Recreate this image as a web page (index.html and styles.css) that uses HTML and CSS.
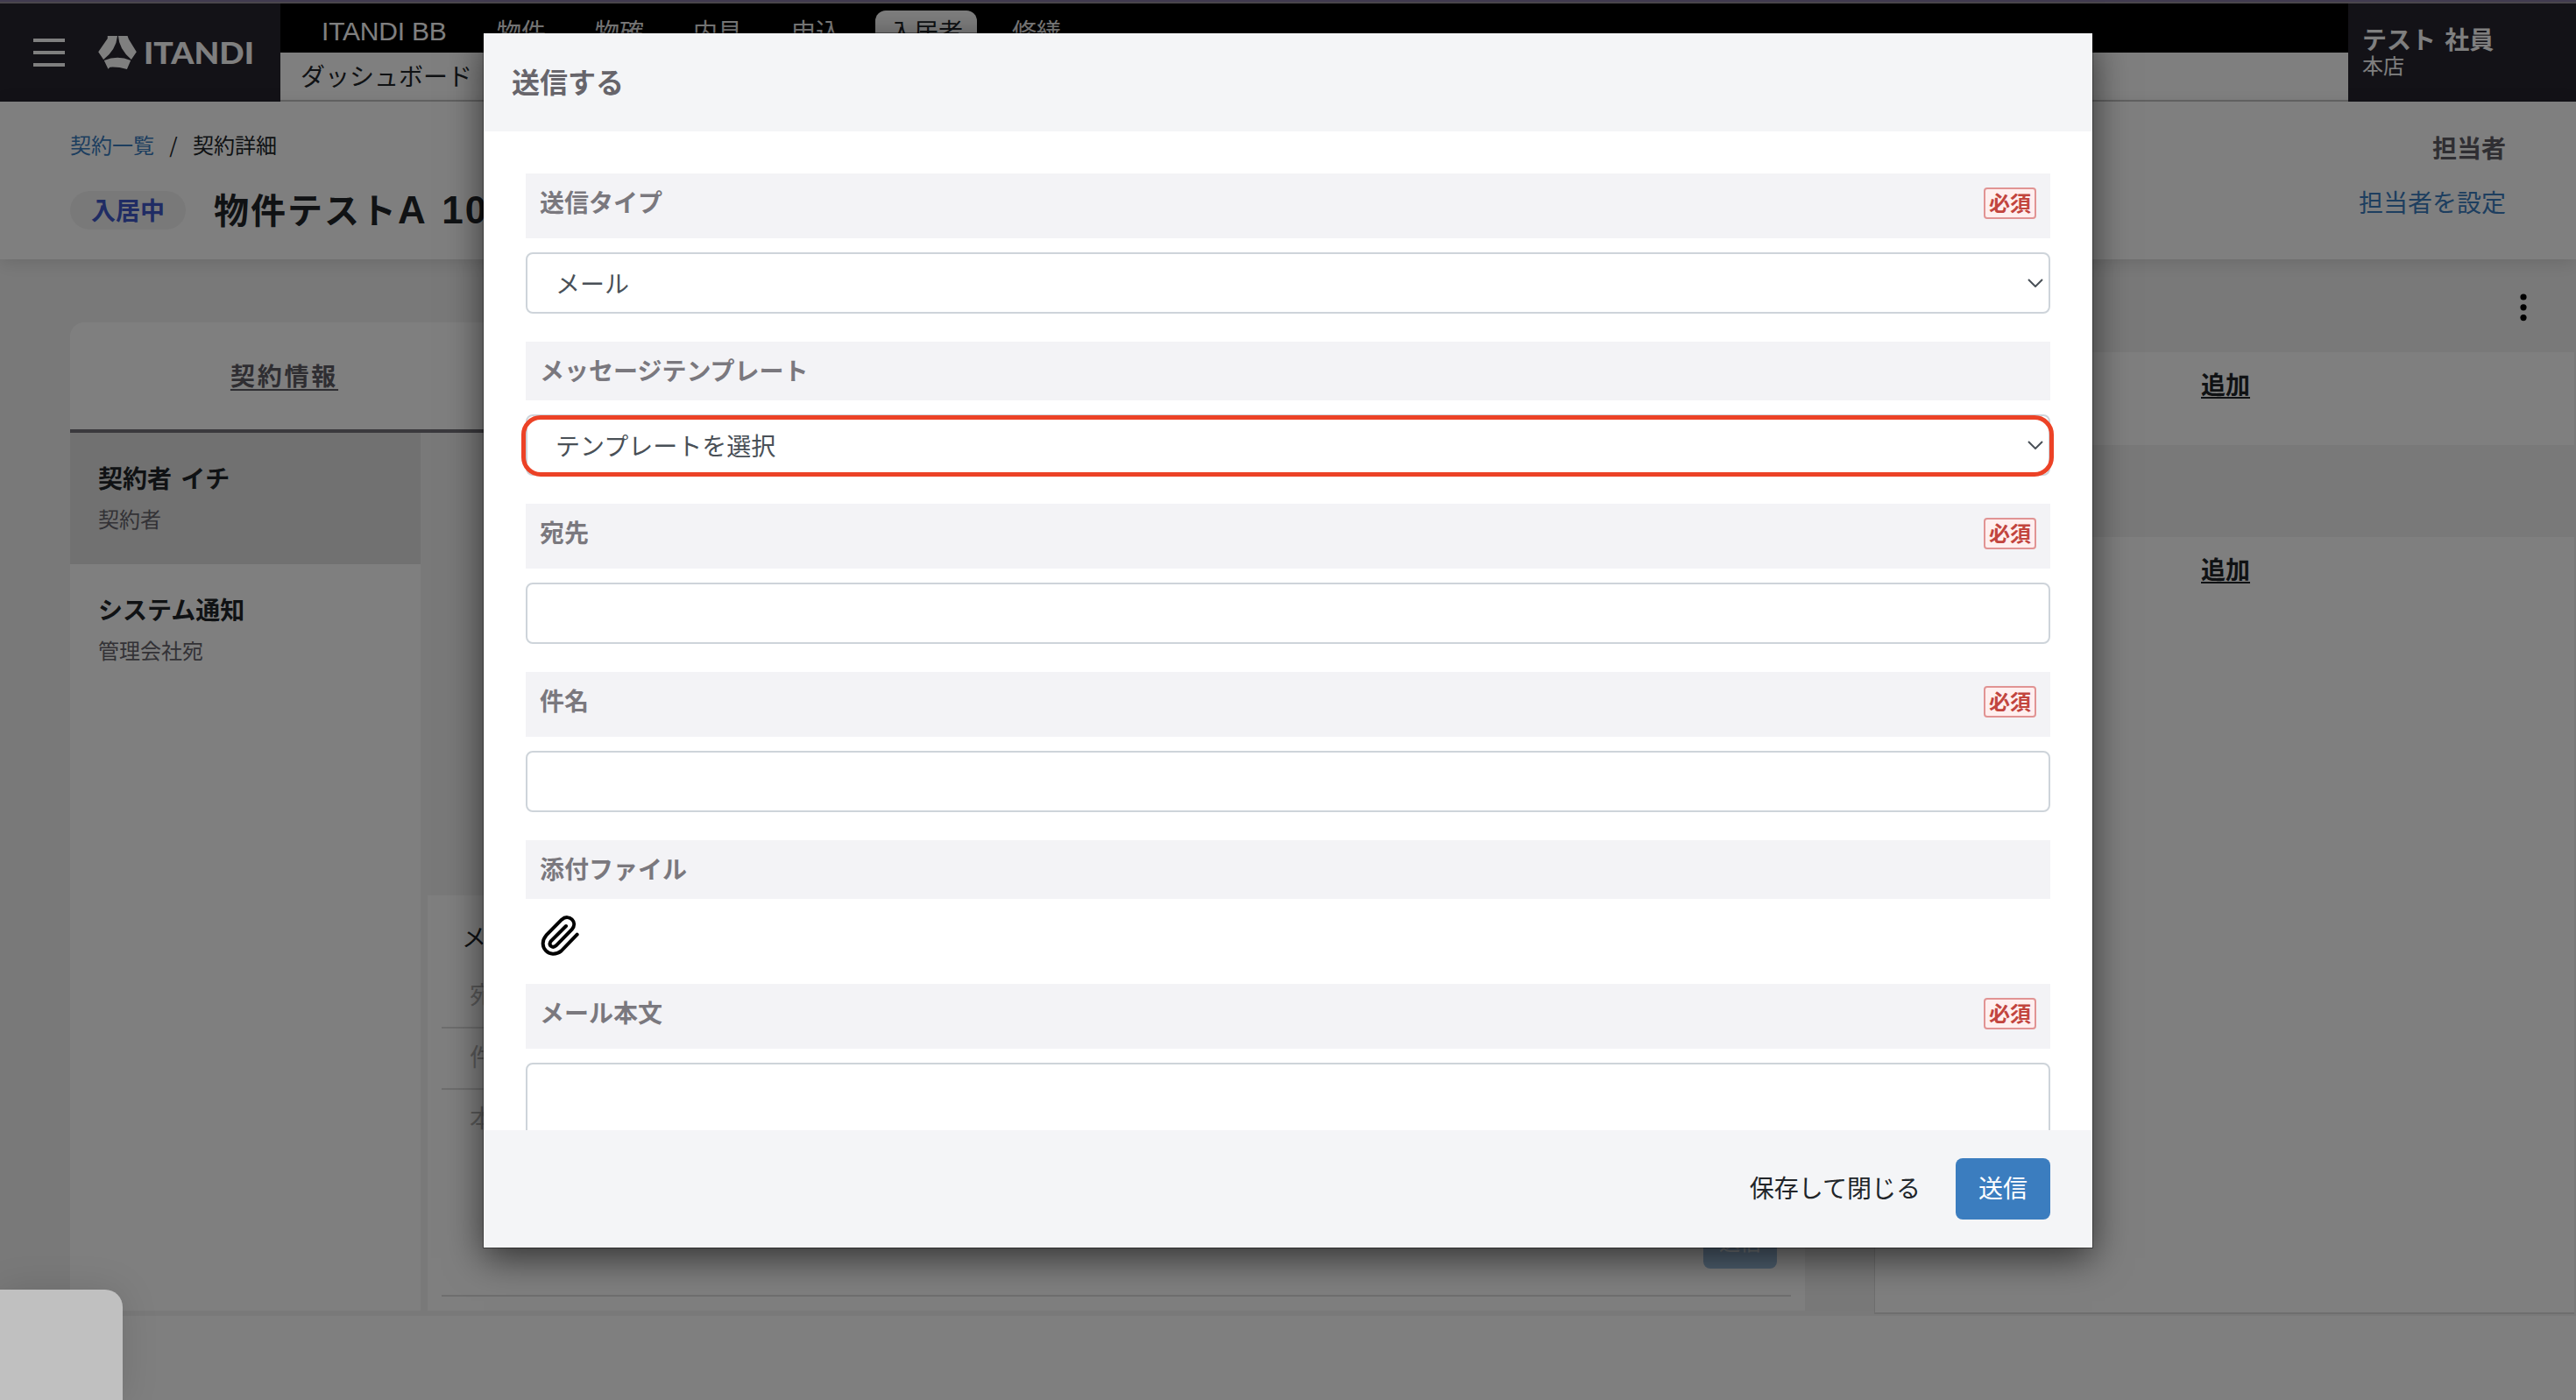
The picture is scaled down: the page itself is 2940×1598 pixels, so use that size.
FILE: index.html
```html
<!DOCTYPE html>
<html lang="ja">
<head>
<meta charset="utf-8">
<title>契約詳細</title>
<link rel="stylesheet" href="styles.css">
</head>
<body>
<div class="top-strip"></div>
<div class="page">
  <header class="header">
    <div class="brand">
      <div class="burger"><i></i><i></i><i></i></div>
      <svg class="mark" viewBox="276 63 132 115"><path d="M308 63H342Q338 110 294 145L276 118L308 72ZM345 63H377L381 74L408 118L390 145Q347 108 345 63ZM296 148Q343 128 388 148L375 178Q343 169 316 171L310 177Z"/></svg>
      <svg class="wordmark" viewBox="0 0 130 44"><text x="0" y="35" textLength="126" lengthAdjust="spacingAndGlyphs">ITANDI</text></svg>
    </div>
    <div class="navs">
      <nav class="nav">
        <a class="nav-item latin">ITANDI BB</a><a class="nav-item">物件</a><a class="nav-item">物確</a><a class="nav-item">内見</a><a class="nav-item">申込</a><a class="nav-item active">入居者</a><a class="nav-item">修繕</a>
      </nav>
      <nav class="subnav"><a>ダッシュボード</a></nav>
    </div>
    <div class="user"><b>テスト 社員</b><span>本店</span></div>
  </header>

  <section class="summary">
    <div>
      <div class="crumbs"><a class="link">契約一覧</a><span class="slash">/</span><span>契約詳細</span></div>
      <div class="title-row"><span class="status">入居中</span><h1>物件テスト<span class="num">A 10</span></h1></div>
    </div>
    <div class="staff"><b>担当者</b><a class="link">担当者を設定</a></div>
  </section>

  <main class="work">
    <div class="left">
      <div class="tabs"><a class="tab">契約情報</a></div>
      <div class="columns">
        <aside class="threads">
          <div class="thread selected"><b>契約者 イチ</b><span>契約者</span></div>
          <div class="thread"><b>システム通知</b><span>管理会社宛</span></div>
        </aside>
        <div class="compose">
          <div class="compose-title">メール</div>
          <div class="compose-row">宛先</div>
          <div class="compose-row">件名</div>
          <div class="compose-row body">本文<span class="mini-send">送信</span></div>
        </div>
      </div>
    </div>
    <div class="right">
      <div class="band menu"><svg class="kebab" viewBox="0 0 8 32"><circle cx="4" cy="4" r="3.6"/><circle cx="4" cy="15.8" r="3.6"/><circle cx="4" cy="27.6" r="3.6"/></svg></div>
      <div class="entry"><a>追加</a></div>
      <div class="band"></div>
      <div class="entry"><a>追加</a></div>
    </div>
  </main>
</div>

<div class="backdrop"></div>
<div class="widget"></div>

<div class="modal">
  <div class="modal-head">送信する</div>
  <div class="modal-body">
    <div class="field">
      <div class="label required">送信タイプ<span class="badge">必須</span></div>
      <div class="control">メール<svg class="chev" viewBox="0 0 18 10"><path d="M1 1L9 9L17 1"/></svg></div>
    </div>
    <div class="field">
      <div class="label">メッセージテンプレート</div>
      <div class="control highlighted">テンプレートを選択<svg class="chev" viewBox="0 0 18 10"><path d="M1 1L9 9L17 1"/></svg></div>
    </div>
    <div class="field">
      <div class="label required">宛先<span class="badge">必須</span></div>
      <div class="control"></div>
    </div>
    <div class="field">
      <div class="label required">件名<span class="badge">必須</span></div>
      <div class="control"></div>
    </div>
    <div class="field attach">
      <div class="label">添付ファイル</div>
      <svg class="clip" viewBox="414 134 130 138"><path d="M500 170L448 222C438 236 454 248 466 237L520 182C542 156 510 126 485 148L432 202C400 240 444 286 484 255L538 199"/></svg>
    </div>
    <div class="field">
      <div class="label required">メール本文<span class="badge">必須</span></div>
      <div class="control area"></div>
    </div>
  </div>
  <div class="modal-foot"><a class="close">保存して閉じる</a><a class="send">送信</a></div>
</div>
</body>
</html>
```
FILE: styles.css
```css
* { box-sizing: border-box; }
body {
  margin: 0;
  width: 2940px;
  height: 1598px;
  overflow: hidden;
  position: relative;
  background: #fff;
  color: #212529;
  font: 28px/40px "Noto Sans CJK JP", "Liberation Sans", sans-serif;
}
.top-strip { height: 4px; background: #413b50; border-bottom: 2px solid #4a464c; }

/* header */
.header { display: flex; height: 112px; }
.brand { width: 320px; background: #26242e; display: flex; align-items: center; padding-left: 38px; }
.burger { width: 36px; height: 32px; display: flex; flex-direction: column; justify-content: space-between; }
.burger i { height: 4px; background: #fff; }
.mark { width: 44px; height: 38px; margin-left: 38px; fill: #fff; }
.wordmark { width: 130px; height: 44px; margin: 0 0 0 8px; overflow: visible; }
.wordmark text { font: 900 34px Lato, sans-serif; fill: #fff; }
.navs { flex: 1; display: flex; flex-direction: column; }
.nav { height: 56px; background: #000; display: flex; gap: 24px; padding: 8px 0 0 31px; color: #fff; }
.nav-item { height: 48px; padding: 3px 16px; }
.latin { font-family: "Liberation Sans", sans-serif; font-size: 30px; width: 176px; letter-spacing: -0.2px; padding-top: 4px; white-space: nowrap; }
.active { background: #fff; color: #212529; border-radius: 12px 12px 0 0; }
.subnav { height: 56px; border-bottom: 2px solid #c8c8c8; padding: 6px 23px; }
.user { width: 260px; background: #26242e; color: #fff; padding: 20px 16px; display: flex; flex-direction: column; }
.user b { line-height: 40px; word-spacing: 4px; }
.user span { font-size: 24px; line-height: 20px; }

/* contract summary */
.summary { height: 180px; padding: 31px 80px 0; display: flex; justify-content: space-between; background: #fff; box-shadow: 0 4px 20px rgba(0,0,0,.12); position: relative; }
.link { color: #3b7dbf; }
.crumbs { font-size: 24px; line-height: 36px; }
.slash { display: inline-block; width: 44px; text-align: center; }
.title-row { display: flex; align-items: center; gap: 32px; margin-top: 35px; height: 44px; }
.status { width: 132px; height: 44px; border-radius: 22px; background: #f3f3f3; color: #4059c8; font-weight: bold; text-align: center; line-height: 42px; }
h1 { margin: -4px 0 0; font-size: 40px; line-height: 44px; letter-spacing: 2px; white-space: nowrap; }
.num { font-family: "Liberation Sans", sans-serif; font-size: 44px; line-height: 40px; word-spacing: 4px; }
.staff { display: flex; flex-direction: column; gap: 22px; text-align: right; padding-top: 1px; }
.staff b { color: #5f5d65; }

/* work area */
.work { height: 1206px; background: #f3f3f3; display: flex; padding-left: 80px; }
.left { width: 1980px; padding-top: 72px; }
.tabs { height: 126px; background: #fff; border-bottom: 4px solid #75737b; border-radius: 16px 0 0 0; }
.tab { display: block; width: 489px; text-align: center; padding-top: 40px; font-weight: bold; letter-spacing: 2.8px; color: #5f5d65; text-decoration: underline; text-decoration-thickness: 2px; text-underline-offset: 4px; }
.columns { display: flex; gap: 8px; height: 1002px; }
.threads { width: 400px; background: #fff; }
.thread { height: 150px; padding: 31px 32px; display: flex; flex-direction: column; gap: 7px; }
.thread b { word-spacing: 4px; }
.thread span { font-size: 24px; color: #66646c; }
.selected { background: #e2e2e2; }
.compose { flex: 1; margin-top: 528px; background: #fff; padding: 28px 16px 16px; display: flex; flex-direction: column; }
.compose-title { height: 50px; margin: -1px 0 1px; padding-left: 23px; }
.compose-row { height: 70px; border-bottom: 2px solid #dcdcdc; padding: 11px 32px; color: #b4b4b4; }
.compose-row:nth-child(2) { height: 74px; padding-top: 14px; }
.compose-row.body { flex: 1; display: flex; justify-content: space-between; padding-right: 16px; }
.mini-send { align-self: flex-end; width: 84px; height: 58px; margin-bottom: 19px; border-radius: 8px; background: #9dbedf; color: #e8eef5; font-size: 24px; line-height: 54px; text-align: center; }
.right { width: 799px; margin-left: 79px; height: 1204px; border-left: 1px solid #dcdcdc; border-bottom: 2px solid #dcdcdc; background: #fff; }
.band { height: 105px; background: #f3f3f3; }
.menu { height: 106px; padding: 39px 54px 0 0; text-align: right; }
.kebab { width: 8px; height: 32px; display: inline-block; vertical-align: top; }
.entry { height: 106px; padding: 16px 0 0 372px; font-weight: bold; text-decoration: underline; text-decoration-thickness: 2px; text-underline-offset: 3px; }

.backdrop { position: absolute; inset: 4px 0 0 0; background: rgba(0,0,0,.5); }
.widget { position: absolute; left: 0; bottom: 0; width: 140px; height: 126px; background: #c0c0c0; border-radius: 0 20px 0 0; box-shadow: 0 0 44px rgba(0,0,0,.12); }

/* dialog */
.modal { position: absolute; left: 552px; top: 38px; width: 1836px; height: 1386px; background: #fff; display: flex; flex-direction: column; box-shadow: 0 0 0 1px rgba(0,0,0,.35), 0 12px 40px rgba(0,0,0,.6); }
.modal-head { height: 112px; background: #f4f5f7; padding: 34px 32px; font-size: 32px; font-weight: bold; color: #67656b; }
.modal-body { flex: 1; min-height: 0; overflow: hidden; padding: 48px 48px 0; display: flex; flex-direction: column; gap: 32px; }
.field { display: flex; flex-direction: column; gap: 16px; flex: none; }
.label { height: 67px; background: #f3f3f6; color: #7a787e; font-weight: bold; padding: 12px 16px; display: flex; justify-content: space-between; }
.label.required { height: 74px; }
.badge { width: 60px; height: 36px; margin-top: 4px; border: 2px solid #e19494; border-radius: 4px; background: #ffefef; color: #c2453e; font-size: 24px; line-height: 30px; text-align: center; }
.control { position: relative; height: 70px; border: 2px solid #ced4da; border-radius: 8px; padding: 0 6px 0 32px; line-height: 63px; color: #495057; display: flex; justify-content: space-between; align-items: center; }
.control.area { height: 300px; }
.highlighted::after { content: ""; position: absolute; left: -7px; right: -6px; top: -1px; bottom: -3px; border: 5px solid #ec4226; border-radius: 22px; }
.chev { width: 18px; height: 10px; fill: none; stroke: #495057; stroke-width: 2; }
.attach { height: 132px; }
.clip { width: 44px; height: 46px; margin: 3px 0 0 17px; fill: none; stroke: #000; stroke-width: 12; stroke-linecap: round; }
.modal-foot { height: 134px; background: #f4f5f7; display: flex; justify-content: flex-end; align-items: center; gap: 40px; padding-right: 48px; }
.send { width: 108px; height: 70px; border-radius: 8px; background: #3b7dbf; color: #fff; text-align: center; line-height: 67px; }
.close { line-height: 67px; height: 70px; }
```
